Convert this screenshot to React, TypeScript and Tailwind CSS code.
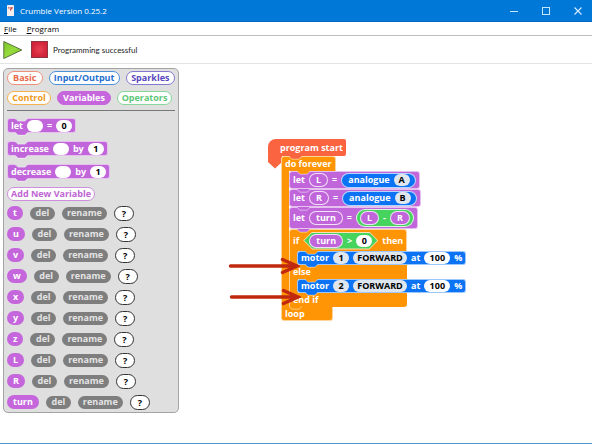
import React from "react";

const variables = ["t", "u", "v", "w", "x", "y", "z", "L", "R", "turn"];

const categories = [
  [
    { name: "Basic", style: "w-[36px] bg-white text-[#e8694a] border-[#f0907a]" },
    { name: "Input/Output", style: "w-[72px] bg-white text-[#1f6fd0] border-[#4a90dc]" },
    { name: "Sparkles", style: "w-[50px] bg-white text-[#5a48c0] border-[#8478d0]" },
  ],
  [
    { name: "Control", style: "w-[44px] bg-white text-[#f09a20] border-[#f5b050]" },
    { name: "Variables", style: "w-[54px] bg-[#c566dc] text-white border-[#c566dc]" },
    { name: "Operators", style: "w-[55px] bg-white text-[#5cc878] border-[#86d89a]" },
  ],
];

type NotchProps = { color: string; side: "top" | "bottom" };

// Small tab that joins one block to the next
const Notch: React.FC<NotchProps> = ({ color, side }) => (
  <svg
    className={side === "top" ? "absolute left-[7px] -top-px" : "absolute left-[7px] -bottom-[4px]"}
    width="14"
    height="4"
    viewBox="0 0 14 4"
    aria-hidden="true"
  >
    <path d="M0 0 L3 3 H10 L13 0 Z" fill={color} />
    <path d="M0 0.5 L3 3.2 H10 L13 0.5" fill="none" stroke="#ffffff" strokeOpacity="0.6" strokeWidth="0.8" />
  </svg>
);

type BlockProps = {
  className: string;
  width?: string;
  top?: string;
  bottom?: string;
  children: React.ReactNode;
};

const Block: React.FC<BlockProps> = ({ className, width = "w-fit", top, bottom, children }) => (
  <div className={`relative flex items-center whitespace-nowrap rounded-[3px] border border-white/60 px-[3px] ${width} ${className}`}>
    {top && <Notch color={top} side="top" />}
    {children}
    {bottom && <Notch color={bottom} side="bottom" />}
  </div>
);

type FieldProps = { label: string; value: string; className?: string };

const Field: React.FC<FieldProps> = ({ label, value, className = "w-[16px] bg-white" }) => (
  <input
    aria-label={label}
    defaultValue={value}
    className={`h-[12px] rounded-full p-0 text-center font-bold text-black outline-none ${className}`}
  />
);

const Variable: React.FC<{ name: string }> = ({ name }) => (
  <span className="flex h-[14px] items-center rounded-full border border-white/80 bg-[#c065da] px-[6px]">{name}</span>
);

const Analogue: React.FC<{ pin: string }> = ({ pin }) => (
  <span className="flex h-[15px] items-center gap-[4px] rounded-full border border-white/70 bg-[#0c74f4] pl-[6px] pr-[5px]">
    analogue
    <button className="h-[12px] w-[16px] rounded-full bg-[#dfe6ee] font-bold text-black">{pin}</button>
  </span>
);

const Motor: React.FC<{ id: string }> = ({ id }) => (
  <div className="-mr-[60px] bg-white">
    <div className="[background:linear-gradient(#ff9505,#ff9505)_left/8px_100%_no-repeat]">
      <Block className="ml-[7px] h-[14px] gap-[4px] bg-[#0c74f4]" top="#ff9505" bottom="#0c74f4">
        motor
        <button className="h-[12px] w-[16px] rounded-full bg-[#dfe6ee] font-bold text-black">{id}</button>
        <button className="h-[12px] w-[54px] rounded-full bg-[#dfe6ee] font-bold text-black">FORWARD</button>
        at
        <Field label={`Motor ${id} speed`} value="100" className="w-[26px] bg-white" />
        %
      </Block>
    </div>
  </div>
);

const TitleBar: React.FC = () => (
  <header className="flex h-[22px] items-center justify-between border-b border-[#0568bd] bg-[#0078d7] pl-[7px] pr-[10px] text-white">
    <div className="flex items-center gap-[6px]">
      <svg width="7" height="11" viewBox="0 0 7 11" aria-hidden="true">
        <rect width="7" height="11" rx="0.6" fill="#f3eeee" />
        <path d="M1.2 2.8 H2.6 M3.4 2.8 H5.8 M4.4 3 L3.4 5.5" stroke="#c33a36" strokeWidth="1.2" fill="none" />
      </svg>
      <h1 className="text-[8px] leading-[14px]">Crumble Version 0.25.2</h1>
    </div>
    <div className="flex gap-[24px]">
      <button aria-label="Minimize">
        <svg width="8" height="8" viewBox="0 0 8 8"><path d="M0 4.5 H8" stroke="#c6e6ff" /></svg>
      </button>
      <button aria-label="Maximize">
        <svg width="8" height="8" viewBox="0 0 8 8"><rect x="0.5" y="0.5" width="7" height="7" fill="none" stroke="#c6e6ff" /></svg>
      </button>
      <button aria-label="Close">
        <svg width="8" height="8" viewBox="0 0 8 8"><path d="M0.5 0.5 L7.5 7.5 M7.5 0.5 L0.5 7.5" stroke="#d6edff" strokeWidth="1.1" /></svg>
      </button>
    </div>
  </header>
);

const Toolbar: React.FC = () => (
  <div className="flex h-[28px] items-center border-b border-[#e4e4e4] bg-white pl-[3px] text-[#222]">
    <button aria-label="Run program">
      <svg width="20" height="20" viewBox="0 0 20 20">
        <defs>
          <linearGradient id="run" x1="0" y1="0" x2="1" y2="1">
            <stop offset="0" stopColor="#78c428" />
            <stop offset="0.5" stopColor="#98dc3c" />
            <stop offset="1" stopColor="#6cb424" />
          </linearGradient>
        </defs>
        <path d="M0.8 1.5 L18.8 10 L0.8 18.5 Z" fill="url(#run)" stroke="#5b7440" />
      </svg>
    </button>
    <button aria-label="Stop program" className="ml-[8px]">
      <svg width="17" height="17" viewBox="0 0 17 17">
        <defs>
          <radialGradient id="stop">
            <stop offset="0" stopColor="#e84052" />
            <stop offset="1" stopColor="#d02238" />
          </radialGradient>
        </defs>
        <rect x="0.5" y="0.5" width="16" height="16" fill="url(#stop)" stroke="#8f3542" />
      </svg>
    </button>
    <p className="ml-[5px] font-['Lato',sans-serif] text-[8px]">Programming successful</p>
  </div>
);

const Palette: React.FC = () => (
  <aside className="w-[176px] shrink-0 self-start rounded-[5px] border border-[#a4a4a4] bg-[#dfdfdf] px-[3px] pb-[2px] pt-[2px] text-white">
    <nav className="flex flex-col gap-[6px]">
      {categories.map((row, index) => (
        <div key={index} className="flex gap-[6px]">
          {row.map((category) => (
            <button key={category.name} className={`h-[14px] whitespace-nowrap rounded-full border leading-[12px] ${category.style}`}>
              {category.name}
            </button>
          ))}
        </div>
      ))}
    </nav>
    <hr className="mt-[5px] border-[#777]" />

    {/* Statement blocks */}
    <div className="mt-[7px] flex flex-col gap-[8px]">
      <Block className="h-[15px] gap-[4px] bg-[#c065da]" top="#dfdfdf" bottom="#c065da">
        let
        <Field label="Let variable" value="" />
        =
        <Field label="Let value" value="0" />
      </Block>
      <Block className="h-[15px] gap-[4px] bg-[#c065da]" top="#dfdfdf" bottom="#c065da">
        increase
        <Field label="Increase variable" value="" />
        by
        <Field label="Increase amount" value="1" />
      </Block>
      <Block className="h-[15px] gap-[4px] bg-[#c065da]" top="#dfdfdf" bottom="#c065da">
        decrease
        <Field label="Decrease variable" value="" />
        by
        <Field label="Decrease amount" value="1" />
      </Block>
    </div>
    <button className="mt-[8px] block h-[14px] w-[88px] whitespace-nowrap rounded-full border border-[#cd8fdc] bg-white leading-[12px] text-[#c065d4]">
      Add New Variable
    </button>

    {/* User variables */}
    <ul className="mt-[4px] flex flex-col gap-[5px]">
      {variables.map((name) => (
        <li key={name} className="flex h-[16px] items-center gap-[7px]">
          <span className="flex h-[14px] items-center rounded-full bg-[#c566dc] px-[6px]">{name}</span>
          <button className="h-[13px] w-[25px] rounded-full bg-[#7e7e7e] text-[#e4e4e4]">del</button>
          <button className="h-[13px] w-[45px] rounded-full bg-[#7e7e7e] text-[#e4e4e4]">rename</button>
          <button className="h-[15px] w-[20px] rounded-full border border-[#333] bg-white font-bold leading-[13px] text-black">?</button>
        </li>
      ))}
    </ul>
  </aside>
);

const Program: React.FC = () => (
  <div className="absolute left-[268px] top-[75px] text-white">
    <div className="relative h-[17px] w-fit whitespace-nowrap rounded-[2px] rounded-tl-[8px] bg-[#fa6440] pl-[12px] pr-[3px] leading-[17px]">
      <svg className="absolute left-0 top-[16px]" width="14" height="14" viewBox="0 0 14 14" aria-hidden="true">
        <path d="M0 0 H14 V7 L7 13.5 L0 7 Z" fill="#fa6440" />
      </svg>
      <span className="relative">program start</span>
    </div>
    <div className="relative ml-[13px] w-fit">
      <Block className="h-[15px] rounded-b-none border-b-0 bg-[#ff9505]" top="#fa6440">
        do forever
      </Block>
      <div className="border-l border-white/60 bg-[#ff9505]">
        <div className="ml-[7px] bg-white">
          <Block className="h-[18px] gap-[4px] bg-[#c065da]" top="#ff9505">
            let <Variable name="L" /> = <Analogue pin="A" />
          </Block>
          <Block className="h-[18px] gap-[4px] bg-[#c065da]" top="#c065da">
            let <Variable name="R" /> = <Analogue pin="B" />
          </Block>
          <Block className="h-[22px] gap-[4px] bg-[#c065da]" top="#c065da">
            let <Variable name="turn" /> =
            <span className="flex h-[18px] items-center gap-[4px] rounded-full border border-white/80 bg-[#46d45e] px-[3px]">
              <Variable name="L" /> - <Variable name="R" />
            </span>
          </Block>
          <Block className="h-[22px] gap-[4px] rounded-b-none border-b-0 bg-[#ff9505]" width="w-[118px]" top="#c065da">
            if
            <span className="bg-white/70 p-px [clip-path:polygon(9px_0,calc(100%_-_9px)_0,100%_50%,calc(100%_-_9px)_100%,9px_100%,0_50%)]">
              <span className="flex h-[16px] items-center gap-[4px] bg-[#46d45e] px-[5px] [clip-path:polygon(8px_0,calc(100%_-_8px)_0,100%_50%,calc(100%_-_8px)_100%,8px_100%,0_50%)]">
                <Variable name="turn" /> &gt; <Field label="Compare value" value="0" />
              </span>
            </span>
            then
          </Block>
          <div className="w-[118px] rounded-br-[3px] border-l border-white/60 bg-[#ff9505]">
            <Motor id="1" />
            <div className="h-[14px] pl-[3px] leading-[14px]">else</div>
            <Motor id="2" />
            <div className="h-[14px] pl-[3px] leading-[14px]">end if</div>
          </div>
        </div>
      </div>
      <Block className="h-[14px] rounded-t-none border-t-0 bg-[#ff9505]" width="w-[52px]" top="#ff9505">
        loop
      </Block>
    </div>
  </div>
);

// Marker arrows drawn over the workspace
const Arrow: React.FC<{ className: string }> = ({ className }) => (
  <svg className={`absolute ${className}`} width="72" height="20" viewBox="0 0 72 20" aria-hidden="true">
    <path d="M2.5 10 H68 M54.5 3.5 L69 10 L54.5 16.5" fill="none" stroke="#c0290d" strokeWidth="3.4" strokeLinecap="round" />
  </svg>
);

const App: React.FC = () => {
  return (
    <div className="flex min-h-screen flex-col overflow-hidden border-b border-[#4d94cc] bg-white font-['Open_Sans',sans-serif] text-[9px]">
      <TitleBar />
      <nav className="flex h-[14px] items-center gap-[10px] border-b border-[#bdbdbd] pl-[4px] text-[8px] text-black">
        <button><u>F</u>ile</button>
        <button><u>P</u>rogram</button>
      </nav>
      <Toolbar />
      <main className="relative flex flex-1 pl-[3px] pt-[4px] font-bold leading-[12px]">
        <Palette />
        <Program />
        <Arrow className="left-[228px] top-[192px]" />
        <Arrow className="left-[229px] top-[223px]" />
      </main>
    </div>
  );
};

export default App;
